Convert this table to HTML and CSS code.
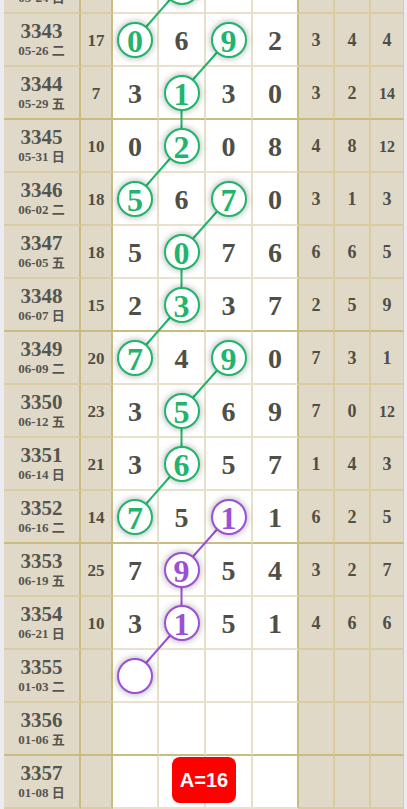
FILE: index.html
```html
<!DOCTYPE html>
<html lang="zh">
<head>
<meta charset="utf-8">
<title>走势图</title>
<link rel="stylesheet" href="styles.css">
</head>
<body>
<div class="wrap">
<div class="grid">
<svg class="links" width="400" height="848" viewBox="0 0 400 848">
<g stroke="#1fb56a" stroke-width="2" fill="none">
<line x1="177.5" y1="25.5" x2="131" y2="78.5"/>
<line x1="224.5" y1="78.5" x2="177.5" y2="131.5"/>
<line x1="177.5" y1="131.5" x2="177.5" y2="184.5"/>
<line x1="177.5" y1="184.5" x2="131" y2="237.5"/>
<line x1="224.5" y1="237.5" x2="177.5" y2="290.5"/>
<line x1="177.5" y1="290.5" x2="177.5" y2="343.5"/>
<line x1="177.5" y1="343.5" x2="131" y2="396.5"/>
<line x1="224.5" y1="396.5" x2="177.5" y2="449.5"/>
<line x1="177.5" y1="449.5" x2="177.5" y2="502.5"/>
<line x1="177.5" y1="502.5" x2="131" y2="555.5"/>
</g>
<g stroke="#9b4fd6" stroke-width="2" fill="none">
<line x1="224.5" y1="555.5" x2="177.5" y2="608.5"/>
<line x1="177.5" y1="608.5" x2="177.5" y2="661.5"/>
<line x1="177.5" y1="661.5" x2="131" y2="714.5"/>
</g>
</svg>

<div class="row">
<div class="c date"><b class="hidden-num"></b><small>05-24 日</small></div><div class="c sum"></div>
<div class="c d"></div><div class="c d"><span class="ball"></span></div><div class="c d"></div><div class="c d last"></div>
<div class="c r"></div><div class="c r"></div><div class="c r end"></div>
</div>
<div class="row">
<div class="c date"><b>3343</b><small>05-26 二</small></div><div class="c sum">17</div>
<div class="c d"><span class="ball">0</span></div><div class="c d">6</div><div class="c d"><span class="ball">9</span></div><div class="c d last">2</div>
<div class="c r">3</div><div class="c r">4</div><div class="c r end">4</div>
</div>
<div class="row thick">
<div class="c date"><b>3344</b><small>05-29 五</small></div><div class="c sum">7</div>
<div class="c d">3</div><div class="c d"><span class="ball">1</span></div><div class="c d">3</div><div class="c d last">0</div>
<div class="c r">3</div><div class="c r">2</div><div class="c r end two">14</div>
</div>
<div class="row">
<div class="c date"><b>3345</b><small>05-31 日</small></div><div class="c sum">10</div>
<div class="c d">0</div><div class="c d"><span class="ball">2</span></div><div class="c d">0</div><div class="c d last">8</div>
<div class="c r">4</div><div class="c r">8</div><div class="c r end two">12</div>
</div>
<div class="row">
<div class="c date"><b>3346</b><small>06-02 二</small></div><div class="c sum">18</div>
<div class="c d"><span class="ball">5</span></div><div class="c d">6</div><div class="c d"><span class="ball">7</span></div><div class="c d last">0</div>
<div class="c r">3</div><div class="c r">1</div><div class="c r end">3</div>
</div>
<div class="row">
<div class="c date"><b>3347</b><small>06-05 五</small></div><div class="c sum">18</div>
<div class="c d">5</div><div class="c d"><span class="ball">0</span></div><div class="c d">7</div><div class="c d last">6</div>
<div class="c r">6</div><div class="c r">6</div><div class="c r end">5</div>
</div>
<div class="row thick">
<div class="c date"><b>3348</b><small>06-07 日</small></div><div class="c sum">15</div>
<div class="c d">2</div><div class="c d"><span class="ball">3</span></div><div class="c d">3</div><div class="c d last">7</div>
<div class="c r">2</div><div class="c r">5</div><div class="c r end">9</div>
</div>
<div class="row">
<div class="c date"><b>3349</b><small>06-09 二</small></div><div class="c sum">20</div>
<div class="c d"><span class="ball">7</span></div><div class="c d">4</div><div class="c d"><span class="ball">9</span></div><div class="c d last">0</div>
<div class="c r">7</div><div class="c r">3</div><div class="c r end">1</div>
</div>
<div class="row">
<div class="c date"><b>3350</b><small>06-12 五</small></div><div class="c sum">23</div>
<div class="c d">3</div><div class="c d"><span class="ball">5</span></div><div class="c d">6</div><div class="c d last">9</div>
<div class="c r">7</div><div class="c r">0</div><div class="c r end two">12</div>
</div>
<div class="row">
<div class="c date"><b>3351</b><small>06-14 日</small></div><div class="c sum">21</div>
<div class="c d">3</div><div class="c d"><span class="ball">6</span></div><div class="c d">5</div><div class="c d last">7</div>
<div class="c r">1</div><div class="c r">4</div><div class="c r end">3</div>
</div>
<div class="row thick">
<div class="c date"><b>3352</b><small>06-16 二</small></div><div class="c sum">14</div>
<div class="c d"><span class="ball">7</span></div><div class="c d">5</div><div class="c d"><span class="ball p">1</span></div><div class="c d last">1</div>
<div class="c r">6</div><div class="c r">2</div><div class="c r end">5</div>
</div>
<div class="row">
<div class="c date"><b>3353</b><small>06-19 五</small></div><div class="c sum">25</div>
<div class="c d">7</div><div class="c d"><span class="ball p">9</span></div><div class="c d">5</div><div class="c d last">4</div>
<div class="c r">3</div><div class="c r">2</div><div class="c r end">7</div>
</div>
<div class="row">
<div class="c date"><b>3354</b><small>06-21 日</small></div><div class="c sum">10</div>
<div class="c d">3</div><div class="c d"><span class="ball p">1</span></div><div class="c d">5</div><div class="c d last">1</div>
<div class="c r">4</div><div class="c r">6</div><div class="c r end">6</div>
</div>
<div class="row">
<div class="c date"><b>3355</b><small>01-03 二</small></div><div class="c sum"></div>
<div class="c d"><span class="ball p"></span></div><div class="c d"></div><div class="c d"></div><div class="c d last"></div>
<div class="c r"></div><div class="c r"></div><div class="c r end"></div>
</div>
<div class="row thick">
<div class="c date"><b>3356</b><small>01-06 五</small></div><div class="c sum"></div>
<div class="c d"></div><div class="c d"></div><div class="c d"></div><div class="c d last"></div>
<div class="c r"></div><div class="c r"></div><div class="c r end"></div>
</div>
<div class="row">
<div class="c date"><b>3357</b><small>01-08 日</small></div><div class="c sum"></div>
<div class="c d"></div><div class="c d badge-cell"><span class="badge">A=16</span></div><div class="c d"></div><div class="c d last"></div>
<div class="c r"></div><div class="c r"></div><div class="c r end"></div>
</div>
</div>
</div>
</body>
</html>
```

FILE: styles.css
```css
html, body {
  margin: 0;
  padding: 0;
}
body {
  background: #ebebf0;
  width: 407px;
  height: 809px;
  overflow: hidden;
  font-family: "Liberation Serif", "Noto Sans CJK SC", serif;
  color: #4f4f46;
}
.wrap {
  padding-left: 4px;
}
.grid {
  position: relative;
  width: 400px;
  margin-top: -39px;
}
.links {
  position: absolute;
  left: 0;
  top: 0;
  pointer-events: none;
}
.row {
  display: grid;
  grid-template-columns: 77px 32px 46px 47px 47px 46px 36px 36px 33px;
  height: 53px;
}
.c {
  box-sizing: border-box;
  border-right: 2px solid #e6e0c8;
  border-bottom: 2px solid #e8e2cc;
  display: flex;
  align-items: center;
  justify-content: center;
  font-weight: bold;
}
.date {
  background: #e1d9c8;
  border-right-color: #c9bc80;
  border-bottom-color: #d9cda3;
  flex-direction: column;
  color: #555550;
}
.date b {
  font-size: 21px;
  line-height: 22px;
  height: 22px;
}
.date small {
  font-size: 13px;
  line-height: 17px;
  font-weight: bold;
}
.sum {
  background: #e1d9c8;
  border-right-color: #c9bc80;
  border-bottom-color: #d9cda3;
  font-size: 17px;
  padding-top: 2px;
}
.d {
  background: #fff;
  font-size: 28px;
  padding-top: 2px;
}
.d.last {
  border-right-color: #c9bc80;
}
.r {
  background: #e1d9c8;
  border-right-color: #d8cca0;
  border-bottom-color: #d8cca0;
  font-size: 18px;
  padding-top: 2px;
}
.r.two {
  font-size: 16px;
}
.r.end {
  border-right: 1px solid #d8cca0;
}
.row.thick .c {
  border-bottom-color: #c9bc80;
}
.ball {
  position: relative;
  z-index: 1;
  box-sizing: border-box;
  width: 36px;
  height: 36px;
  margin-top: -2px;
  border: 2px solid #1fb56a;
  border-radius: 50%;
  background: #fff;
  color: #1fb56a;
  font-size: 32px;
  line-height: 34px;
  text-align: center;
  box-shadow: 0 0 7px rgba(0, 0, 0, 0.35);
}
.ball.p {
  border-color: #9b4fd6;
  color: #9b4fd6;
}
.badge-cell {
  position: relative;
}
.badge {
  position: absolute;
  left: 13px;
  top: 1px;
  z-index: 2;
  width: 64px;
  height: 46px;
  border-radius: 8px;
  background: #ff0000;
  color: #fff;
  font-family: "Liberation Sans", Arial, sans-serif;
  font-size: 20px;
  font-weight: bold;
  line-height: 46px;
  text-align: center;
}
```
